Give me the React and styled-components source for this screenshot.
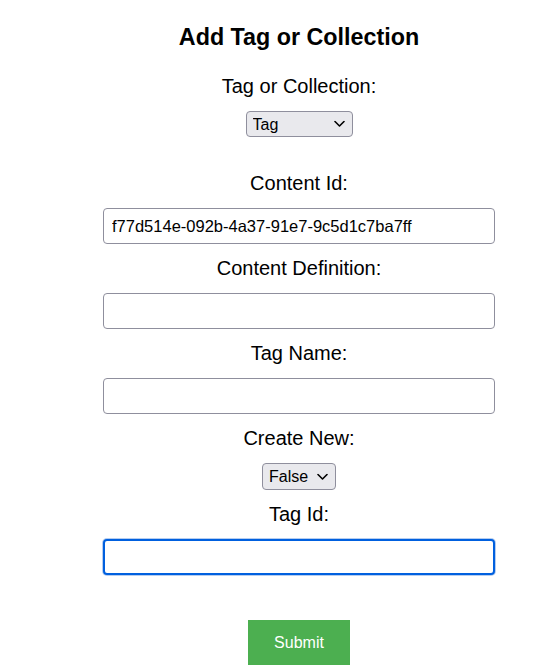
import React, { useState } from "react";
import styled, { createGlobalStyle } from "styled-components";

const GlobalStyle = createGlobalStyle`
  body {
    margin: 0;
    background: #ffffff;
    font-family: "Liberation Sans", Arial, sans-serif;
    color: #000000;
  }
`;

const Page = styled.form`
  box-sizing: border-box;
  width: 560px;
  padding: 23px 0 0 38px;
  display: flex;
  flex-direction: column;
  align-items: center;
  gap: 12px;
`;

const Title = styled.h2`
  margin: 0 0 11px 0;
  font-size: 23.3px;
  line-height: 28px;
  font-weight: bold;
`;

const Label = styled.label`
  font-size: 20px;
  line-height: 25px;
  margin-top: ${({ $gapTop }) => ($gapTop ? $gapTop : 0)}px;
`;

const SelectWrap = styled.div`
  position: relative;
  width: ${({ $width }) => $width}px;
  height: ${({ $height }) => $height}px;
`;

const Select = styled.select`
  appearance: none;
  box-sizing: border-box;
  width: 100%;
  height: 100%;
  padding: 0 0 0 6px;
  font-family: "Liberation Sans", Arial, sans-serif;
  font-size: 16px;
  color: #000000;
  background: #e9e9ed;
  border: 1px solid #8f8f9d;
  border-radius: 4px;
  outline: none;
`;

const Chevron = styled.svg`
  position: absolute;
  right: 8px;
  top: 50%;
  transform: translateY(-50%);
  pointer-events: none;
`;

const TextInput = styled.input`
  box-sizing: border-box;
  width: 392px;
  height: 36px;
  padding: 0 8px;
  font-family: "Liberation Sans", Arial, sans-serif;
  font-size: 16.5px;
  color: #000000;
  background: #ffffff;
  border: ${({ $focused }) => ($focused ? "2px solid #0060df" : "1px solid #8f8f9d")};
  border-radius: 4px;
  box-shadow: ${({ $focused }) => ($focused ? "0 0 0 1px #b5cdf0" : "none")};
  outline: none;
  caret-color: #000000;
`;

const SubmitButton = styled.button`
  margin-top: 33px;
  width: 102px;
  height: 45px;
  border: none;
  background: #4caf50;
  color: #ffffff;
  font-family: "Liberation Sans", Arial, sans-serif;
  font-size: 16px;
  cursor: pointer;
`;

const Dropdown = ({ width, height, value, onChange, options }) => (
  <SelectWrap $width={width} $height={height}>
    <Select value={value} onChange={(e) => onChange(e.target.value)}>
      {options.map((o) => (
        <option key={o} value={o}>
          {o}
        </option>
      ))}
    </Select>
    <Chevron width="11" height="7" viewBox="0 0 11 7">
      <polyline
        points="1,1 5.5,5.5 10,1"
        fill="none"
        stroke="#000"
        strokeWidth="1.6"
        strokeLinecap="round"
        strokeLinejoin="round"
      />
    </Chevron>
  </SelectWrap>
);

const App = () => {
  const [kind, setKind] = useState("Tag");
  const [createNew, setCreateNew] = useState("False");
  const [contentId, setContentId] = useState("f77d514e-092b-4a37-91e7-9c5d1c7ba7ff");
  const [definition, setDefinition] = useState("");
  const [tagName, setTagName] = useState("");
  const [tagId, setTagId] = useState("");

  return (
    <>
      <GlobalStyle />
      <Page onSubmit={(e) => e.preventDefault()}>
        <Title>Add Tag or Collection</Title>
        <Label>Tag or Collection:</Label>
        <Dropdown width={107} height={26} value={kind} onChange={setKind} options={["Tag", "Collection"]} />

        <Label $gapTop={22}>Content Id:</Label>
        <TextInput value={contentId} onChange={(e) => setContentId(e.target.value)} />

        <Label>Content Definition:</Label>
        <TextInput value={definition} onChange={(e) => setDefinition(e.target.value)} />

        <Label>Tag Name:</Label>
        <TextInput value={tagName} onChange={(e) => setTagName(e.target.value)} />

        <Label>Create New:</Label>
        <Dropdown width={74} height={27} value={createNew} onChange={setCreateNew} options={["False", "True"]} />

        <Label>Tag Id:</Label>
        <TextInput $focused autoFocus value={tagId} onChange={(e) => setTagId(e.target.value)} />

        <SubmitButton type="submit">Submit</SubmitButton>
      </Page>
    </>
  );
};

export default App;
